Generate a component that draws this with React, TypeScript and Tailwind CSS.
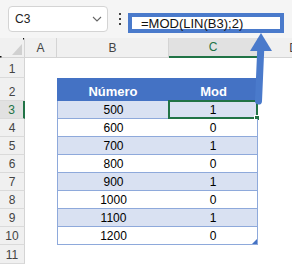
const ROWS: [number, number][] = [
  [500, 1],
  [600, 0],
  [700, 1],
  [800, 0],
  [900, 1],
  [1000, 0],
  [1100, 1],
  [1200, 0],
]

function RowHead({ n, active = false }: { n: number; active?: boolean }) {
  return (
    <div
      className={`w-[25px] shrink-0 h-full flex items-end justify-center pb-[1px] leading-[14px] text-[12px] border-b border-[#dadada] ${
        active
          ? 'bg-[#e1e1e1] text-[#217346] border-r-2 border-r-[#217346]'
          : 'bg-[#f0f0f0] text-[#444] border-r border-r-[#d4d4d4]'
      }`}
    >
      {n}
    </div>
  )
}

function ColHead({ label, className }: { label: string; className: string }) {
  return (
    <div
      className={`h-full shrink-0 flex items-center justify-center text-[12px] leading-[14px] ${className}`}
    >
      {label}
    </div>
  )
}

export default function App() {
  return (
    <div className="relative w-[292px] h-[264px] overflow-hidden bg-white font-['Liberation_Sans',Arial,sans-serif]">
      {/* name box + formula bar */}
      <div className="h-[38px] flex items-start bg-[#f5f5f5]">
        <div className="ml-[8px] mt-[6px] w-[100px] h-[26px] shrink-0 bg-white border border-[#d4d4d4] rounded-[4px] flex items-center justify-between pl-[6px] pr-[5px]">
          <span className="text-[12px] text-[#222]">C3</span>
          <svg width="10" height="6" viewBox="0 0 10 6" fill="none">
            <path d="M1 1l4 4 4-4" stroke="#666" strokeWidth="1.1" />
          </svg>
        </div>
        <div className="ml-[11px] mt-[13px] w-[2px] flex flex-col gap-[3px] shrink-0">
          <span className="w-[2px] h-[2px] bg-[#444]" />
          <span className="w-[2px] h-[2px] bg-[#444]" />
          <span className="w-[2px] h-[2px] bg-[#444]" />
        </div>
        <div className="ml-[7px] mt-[13px] w-[156px] h-[20px] shrink-0 border-4 border-[#4a7acb] bg-white flex items-center pl-[9px] text-[13px] leading-none text-[#111] whitespace-nowrap">
          =MOD(LIN(B3);2)
        </div>
      </div>

      {/* column headers */}
      <div className="flex h-[20px]">
        <div className="w-[25px] shrink-0 h-full bg-[#f0f0f0] border-r border-b border-[#d4d4d4]">
          <svg width="24" height="19" viewBox="0 0 24 19">
            <path d="M12 17H22V6Z" fill="#d0d0d0" />
            <rect x="23" y="0" width="1.5" height="1.5" fill="#111" />
          </svg>
        </div>
        <ColHead label="A" className="w-[32px] bg-[#f0f0f0] text-[#444] border-r border-b border-[#d4d4d4]" />
        <ColHead label="B" className="w-[112px] bg-[#f0f0f0] text-[#444] border-r border-b border-[#d4d4d4]" />
        <ColHead label="C" className="w-[88px] bg-[#e1e1e1] text-[#217346] border-b-2 border-[#217346]" />
        <ColHead label="D" className="w-[72px] bg-[#f0f0f0] text-[#444] border-l border-b border-[#d4d4d4]" />
      </div>

      {/* row 1 */}
      <div className="flex h-[20px]">
        <RowHead n={1} />
        <div className="flex-1 bg-white" />
      </div>

      {/* row 2: table header */}
      <div className="flex h-[23px]">
        <RowHead n={2} />
        <div className="w-[32px] shrink-0" />
        <div className="w-[112px] shrink-0 bg-[#4472c4] text-white font-bold text-[13px] leading-[14px] flex items-end justify-center pb-[2px]">
          Número
        </div>
        <div className="w-[89px] shrink-0 bg-[#4472c4] text-white font-bold text-[13px] leading-[14px] flex items-end justify-center pb-[2px]">
          Mod
        </div>
      </div>

      {ROWS.map(([num, mod], i) => {
        const band = i % 2 === 0 ? 'bg-[#d9e1f2]' : 'bg-white'
        const last = i === ROWS.length - 1
        return (
          <div key={num} className="flex h-[18px]">
            <RowHead n={i + 3} active={i === 0} />
            <div className="w-[32px] shrink-0" />
            <div
              className={`w-[112px] shrink-0 ${band} border-l border-b border-[#8ea9db] text-[12px] leading-[14px] text-black flex items-end justify-center pb-[1px]`}
            >
              {num}
            </div>
            <div
              className={`relative w-[89px] shrink-0 ${band} border-r border-b border-[#8ea9db] text-[12px] leading-[14px] text-black flex items-end justify-center pb-[1px]`}
            >
              {mod}
              {i === 0 && (
                <>
                  <div className="absolute -left-[1px] -top-[1px] -right-[1px] -bottom-[1px] border-2 border-[#217346]" />
                  <div className="absolute -right-[3px] -bottom-[3px] w-[6px] h-[6px] bg-[#217346] border border-white" />
                </>
              )}
              {last && (
                <svg className="absolute right-[0px] bottom-[0px]" width="5" height="5" viewBox="0 0 5 5">
                  <path d="M0 5H5V0Z" fill="#4472c4" />
                </svg>
              )}
            </div>
          </div>
        )
      })}

      {/* row 11 */}
      <div className="flex h-[19px]">
        <RowHead n={11} />
        <div className="flex-1 bg-white" />
      </div>

      {/* annotation arrow */}
      <svg
        className="absolute left-0 top-0 pointer-events-none"
        width="292"
        height="264"
        viewBox="0 0 292 264"
      >
        <line x1="258.5" y1="101" x2="260.8" y2="48" stroke="#4a7acb" strokeWidth="7" strokeLinecap="round" />
        <path d="M261 33L250 51H272Z" fill="#4a7acb" />
        <rect x="0" y="56" width="1.5" height="1.5" fill="#111" />
      </svg>
    </div>
  )
}
